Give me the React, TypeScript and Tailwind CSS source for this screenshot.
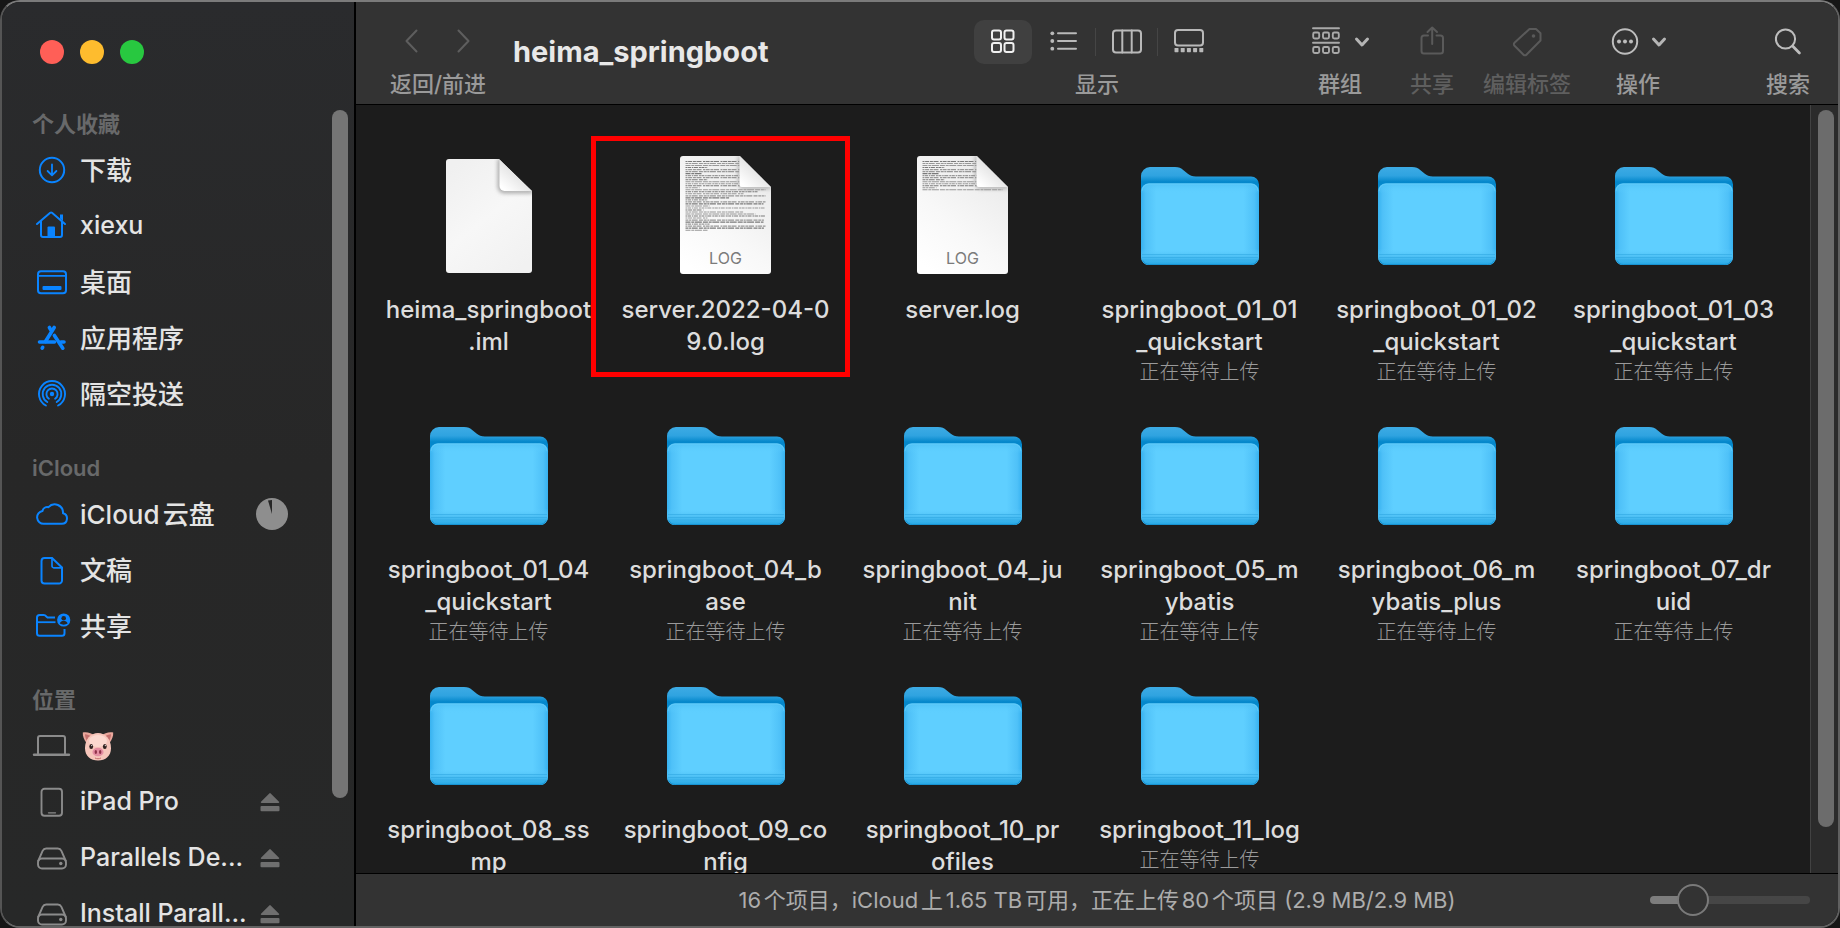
import type { ReactNode } from "react";

const BLUE = "#0a84ff";
const GREY = "#8b8b8b";

function SideIcon({ color, children }: { color: string; children: ReactNode }) {
  return (
    <svg
      viewBox="0 0 36 36"
      className="h-9 w-9 shrink-0 overflow-visible"
      fill="none"
      stroke={color}
      strokeWidth={2}
      strokeLinecap="round"
      strokeLinejoin="round"
      aria-hidden="true"
    >
      {children}
    </svg>
  );
}

const DownloadIcon = () => (
  <SideIcon color={BLUE}>
    <circle cx="18" cy="18" r="12.2" />
    <path d="M18 12.5v10.6M13.6 19l4.4 4.3 4.4-4.3" strokeWidth={1.8} />
  </SideIcon>
);

const HomeIcon = () => (
  <SideIcon color={BLUE}>
    <path d="M3 16 16.2 4.8a1.4 1.4 0 0 1 1.8 0L31 16" />
    <path d="M7 13.5V27a2 2 0 0 0 2 2h17a2 2 0 0 0 2-2V13.5" />
    <path d="M26 6.5h3v6.5l-3-2.6z" fill={BLUE} stroke="none" />
    <path d="M13.5 29V19.5a1 1 0 0 1 1-1H20a1 1 0 0 1 1 1V29z" fill={BLUE} stroke="none" />
  </SideIcon>
);

const DesktopIcon = () => (
  <SideIcon color={BLUE}>
    <rect x="4" y="7.2" width="28" height="22" rx="3" />
    <path d="M4 11.8h28" strokeWidth={1.8} />
    <rect x="8.5" y="22" width="19" height="4" rx="1" fill={BLUE} stroke="none" />
  </SideIcon>
);

const AppsIcon = () => (
  <SideIcon color={BLUE}>
    <g strokeWidth={3.6}>
      <path d="M20.2 7.5 11.5 21.5" />
      <path d="M8.2 28.2 8.7 27.3" />
      <path d="M15.4 7.5 16.6 9.6" />
      <path d="M20.4 15.5 28.8 28.2" />
      <path d="M5.5 22h15M27 22h3" />
    </g>
  </SideIcon>
);

const AirdropIcon = () => (
  <SideIcon color={BLUE}>
    <circle cx="18" cy="18" r="2.2" fill={BLUE} stroke="none" />
    <path d="M14.9 22.7a5.6 5.6 0 1 1 6.2 0" strokeWidth={1.9} />
    <path d="M13.3 26a9.3 9.3 0 1 1 9.4 0" strokeWidth={1.9} />
    <path d="M11.9 29.5a13 13 0 1 1 12.2 0" strokeWidth={1.9} />
  </SideIcon>
);

const CloudIcon = () => (
  <SideIcon color={BLUE}>
    <path d="M9.8 27.8a6.5 6.5 0 0 1-1.3-12.9 5 5 0 0 1 6-3.7A8.3 8.3 0 0 1 29 17.2a5.4 5.4 0 0 1-1.2 10.6z" />
  </SideIcon>
);

const DocIcon = () => (
  <SideIcon color={BLUE}>
    <path d="M10.5 6H18l10 9.5v13a3 3 0 0 1-3 3H10.5a3 3 0 0 1-3-3V9a3 3 0 0 1 3-3z" />
    <path d="M18 6v8a1.8 1.8 0 0 0 1.8 1.8H28" strokeWidth={1.7} />
  </SideIcon>
);

const SharedFolderIcon = () => (
  <SideIcon color={BLUE}>
    <path
      d="M21 9.5h-7.5l-2.6-2.2a2 2 0 0 0-1.2-.4H5.6A2.6 2.6 0 0 0 3 9.5v15.7a2.6 2.6 0 0 0 2.6 2.6h22.3a2.6 2.6 0 0 0 2.6-2.6V21"
      strokeLinecap="butt"
    />
    <path d="M3 14.2h18.5" strokeLinecap="butt" strokeWidth={1.8} />
    <circle cx="29.7" cy="12" r="6.6" fill={BLUE} stroke="none" />
    <circle cx="29.7" cy="10.2" r="2.3" fill="#272727" stroke="none" />
    <path d="M25.8 15.5c.6-1.8 2-2.4 3.900-2.400s3.300.6 3.900 2.400c-2.200 1.500-5.600 1.500-7.800 0z" fill="#272727" stroke="none" />
  </SideIcon>
);

const LaptopIcon = () => (
  <SideIcon color={GREY}>
    <path d="M4 25.5V10a2 2 0 0 1 2-2h23a2 2 0 0 1 2 2v15.5" />
    <path d="M0 26.8h35" strokeWidth={2.4} />
  </SideIcon>
);

const TabletIcon = () => (
  <SideIcon color={GREY}>
    <rect x="7.5" y="4.8" width="20.5" height="27" rx="3" strokeWidth={1.9} />
    <path d="M14.5 28.8h7" strokeWidth={1.3} />
  </SideIcon>
);

const DriveIcon = () => (
  <SideIcon color={GREY}>
    <path d="M4.2 21 8.6 10.8A4 4 0 0 1 12.2 8.5h11.6a4 4 0 0 1 3.6 2.3L31.8 21" strokeWidth={1.9} />
    <rect x="4" y="18.5" width="28" height="10" rx="4" strokeWidth={1.9} />
    <circle cx="26.8" cy="23.5" r="1.7" fill={GREY} stroke="none" />
  </SideIcon>
);

const PigFace = () => (
  <svg viewBox="0 0 32 32" className="ml-0.5 h-8 w-8" role="img" aria-label="小猪">
    <path d="M.8 2.6C4 1.5 10 3 12.5 5.5L4.5 13C2 10 .5 6 .8 2.6z" fill="#e9a79c" />
    <path d="M31.2 2.6C28 1.5 22 3 19.5 5.5l8 7.5c2.5-3 4-7 3.7-10.4z" fill="#e9a79c" />
    <path d="M3 4.2c2 0 4.8 1 6.6 2.5L5 11C3.8 9 3 6.5 3 4.2z" fill="#c3706e" />
    <path d="M29 4.2c-2 0-4.8 1-6.6 2.5L27 11c1.2-2 2-4.5 2-6.8z" fill="#c3706e" />
    <path d="M16 3C8.5 3 3 9.5 3 18.2 3 26 8.5 30.5 16 30.5S29 26 29 18.2C29 9.5 23.5 3 16 3z" fill="#f7c6bb" />
    <ellipse cx="16" cy="11" rx="9" ry="6" fill="#fcd9d0" />
    <ellipse cx="9.2" cy="16.5" rx="1.9" ry="2.5" fill="#2f2220" />
    <ellipse cx="22.8" cy="16.5" rx="1.9" ry="2.5" fill="#2f2220" />
    <circle cx="9.7" cy="15.6" r=".6" fill="#fff" />
    <circle cx="23.3" cy="15.6" r=".6" fill="#fff" />
    <ellipse cx="16" cy="22" rx="5.6" ry="4.3" fill="#e58fa3" />
    <ellipse cx="13.8" cy="22" rx="1.2" ry="2" fill="#8e3248" />
    <ellipse cx="18.2" cy="22" rx="1.2" ry="2" fill="#8e3248" />
    <path d="M13 28c2 1 4 1 6 0" stroke="#c3706e" strokeWidth="1" fill="none" />
  </svg>
);

const ProgressPie = () => (
  <svg viewBox="0 0 32 32" className="h-8 w-8 shrink-0" aria-hidden="true">
    <circle cx="16" cy="16" r="16" fill="#8e8e8e" />
    <path d="M16 16 12 2.5Q14 2 16 2z" fill="#272727" />
  </svg>
);

const EjectButton = ({ name }: { name: string }) => (
  <button type="button" aria-label={"推出 " + name} className="flex h-8 w-8 shrink-0 items-center justify-center pr-1">
    <svg viewBox="0 0 20 20" className="h-5 w-5" fill="#6f6f6f" aria-hidden="true">
      <path d="M9.3 1.4a1 1 0 0 1 1.4 0l8.3 8.4a.7.7 0 0 1-.5 1.2h-17a.7.7 0 0 1-.5-1.2z" />
      <rect x=".5" y="14" width="19" height="5.2" rx="1" />
    </svg>
  </button>
);

type Place = { label: string; icon: ReactNode; face?: ReactNode; end?: ReactNode };

const sections: { title: string; places: Place[] }[] = [
  {
    title: "个人收藏",
    places: [
      { label: "下载", icon: <DownloadIcon /> },
      { label: "xiexu", icon: <HomeIcon /> },
      { label: "桌面", icon: <DesktopIcon /> },
      { label: "应用程序", icon: <AppsIcon /> },
      { label: "隔空投送", icon: <AirdropIcon /> },
    ],
  },
  {
    title: "iCloud",
    places: [
      { label: "iCloud云盘", icon: <CloudIcon />, end: <ProgressPie /> },
      { label: "文稿", icon: <DocIcon /> },
      { label: "共享", icon: <SharedFolderIcon /> },
    ],
  },
  {
    title: "位置",
    places: [
      { label: "小猪", icon: <LaptopIcon />, face: <PigFace /> },
      { label: "iPad Pro", icon: <TabletIcon />, end: <EjectButton name="iPad Pro" /> },
      { label: "Parallels De...", icon: <DriveIcon />, end: <EjectButton name="Parallels" /> },
      { label: "Install Parall...", icon: <DriveIcon />, end: <EjectButton name="Install" /> },
    ],
  },
];

const labelSize = (label: string) => (/^[ -~]+$/.test(label) ? "text-[25px]" : "text-[26px]");

function Sidebar() {
  return (
    <aside className="relative w-[354px] shrink-0 overflow-hidden border-r-2 border-black bg-linear-to-b from-[#2a2b2d] via-[#272727] to-[#272828]">
      <div className="flex gap-4 pt-[38px] pl-[38px]">
        <button type="button" aria-label="关闭" className="h-6 w-6 rounded-full bg-[#ff5f57]" />
        <button type="button" aria-label="最小化" className="h-6 w-6 rounded-full bg-[#febc2e]" />
        <button type="button" aria-label="缩放" className="h-6 w-6 rounded-full bg-[#28c840]" />
      </div>
      <nav className="mt-[42px] flex flex-col gap-7">
        {sections.map((section) => (
          <section key={section.title}>
            <h2 className="h-9 pl-[30px] text-[22px] leading-9 font-semibold text-[#68696a]">{section.title}</h2>
            <ul>
              {section.places.map((place) => (
                <li key={place.label} className="flex h-14 items-center pr-[66px] pl-8">
                  <a href="#" className="flex min-w-0 flex-1 items-center gap-2.5 font-medium whitespace-nowrap text-[#e4e4e4]">
                    {place.icon}
                    {place.face ?? <span className={labelSize(place.label)}>{place.label}</span>}
                  </a>
                  {place.end}
                </li>
              ))}
            </ul>
          </section>
        ))}
      </nav>
      <div className="absolute top-[108px] right-1.5 h-[74.5%] w-4 rounded-full bg-[#757575]" />
    </aside>
  );
}

const Chevron = () => (
  <svg viewBox="0 0 16 12" className="h-3 w-4" fill="none" stroke="#b5b5b5" strokeWidth="3" strokeLinecap="round" strokeLinejoin="round" aria-hidden="true">
    <path d="m2.5 3 5.5 6 5.5-6" />
  </svg>
);

function ToolIcon({ color, children }: { color: string; children: ReactNode }) {
  return (
    <svg viewBox="0 0 32 32" className="h-8 w-8 shrink-0" fill="none" stroke={color} strokeWidth={2} strokeLinecap="round" strokeLinejoin="round" aria-hidden="true">
      {children}
    </svg>
  );
}

function Tool({ label, className, dim, children }: { label: string; className: string; dim?: boolean; children: ReactNode }) {
  return (
    <div className={"flex shrink-0 flex-col items-center " + className}>
      <div className="flex h-11 items-center justify-center">{children}</div>
      <span className={"text-[22px] leading-10 font-medium whitespace-nowrap " + (dim ? "text-[#5f5f5f]" : "text-[#9a9a9a]")}>{label}</span>
    </div>
  );
}

const dots = [3.5, 9.7, 15.9, 22.1, 28.3];

function Toolbar() {
  return (
    <header className="flex h-[103px] shrink-0 items-start border-b border-black bg-[#333333] pt-[18px] pr-7 pl-[31px]">
      <Tool label="返回/前进" className="w-[102px]">
        <button type="button" aria-label="返回" className="flex w-[52px] justify-center">
          <ToolIcon color="#5e5e5e"><path d="M20.5 4.5 10.5 15l10 10.5" /></ToolIcon>
        </button>
        <button type="button" aria-label="前进" className="flex w-[52px] justify-center">
          <ToolIcon color="#5e5e5e"><path d="M10.5 4.5 20.5 15l-10 10.5" /></ToolIcon>
        </button>
      </Tool>
      <h1 className="ml-6 pt-3 text-[29px] leading-10 font-bold text-[#e8e8e8]">heima_springboot</h1>

      <Tool label="显示" className="ml-auto">
        <div className="flex items-center">
          <button type="button" aria-label="图标" aria-pressed="true" className="flex h-11 w-[58px] items-center justify-center rounded-[10px] bg-[#404040]">
            <ToolIcon color="#f0f0f0">
              <rect x="5" y="4.5" width="9" height="9" rx="2" />
              <rect x="17.5" y="4.5" width="9" height="9" rx="2" />
              <rect x="5" y="17" width="9" height="9" rx="2" />
              <rect x="17.5" y="17" width="9" height="9" rx="2" />
            </ToolIcon>
          </button>
          <button type="button" aria-label="列表" className="flex h-7 w-[64px] items-center justify-center border-r border-[#454545]">
            <ToolIcon color="#b9b9b9">
              <path d="M10 7.3h18M10 15h18M10 22.7h18" />
              <g fill="#b9b9b9" stroke="none">
                <circle cx="4.3" cy="7.3" r="1.9" />
                <circle cx="4.3" cy="15" r="1.9" />
                <circle cx="4.3" cy="22.7" r="1.9" />
              </g>
            </ToolIcon>
          </button>
          <button type="button" aria-label="分栏" className="flex h-7 w-[62px] items-center justify-center border-r border-[#454545]">
            <ToolIcon color="#b9b9b9">
              <rect x="2" y="4.5" width="28" height="22" rx="3" />
              <path d="M11.3 4.5v22M20.7 4.5v22" />
            </ToolIcon>
          </button>
          <button type="button" aria-label="画廊" className="flex h-7 w-[62px] items-center justify-center">
            <ToolIcon color="#b9b9b9">
              <rect x="2" y="4" width="28" height="15.5" rx="3" />
              <g fill="#b9b9b9" stroke="none">
                {dots.map((x) => (
                  <rect key={x} x={x - 2} y="22" width="4" height="4.2" rx=".6" />
                ))}
              </g>
            </ToolIcon>
          </button>
        </div>
      </Tool>

      <Tool label="群组" className="ml-[90px] w-[60px]">
        <button type="button" aria-label="群组方式" className="flex items-center gap-3">
          <ToolIcon color="#a9a9a9">
            <path d="M3 2.3h26M3 16.8h26" strokeWidth={1.9} />
            {[3.2, 13, 22.8].map((x) => (
              <g key={x} strokeWidth={1.9}>
                <rect x={x} y="6.5" width="6" height="6" rx="1.5" />
                <rect x={x} y="21" width="6" height="6" rx="1.5" />
              </g>
            ))}
          </ToolIcon>
          <Chevron />
        </button>
      </Tool>

      <Tool label="共享" className="ml-10 w-11" dim>
        <button type="button" aria-label="共享项目">
          <ToolIcon color="#5a5a5a">
            <path d="M12 9.5H8A2.5 2.5 0 0 0 5.5 12v13A2.5 2.5 0 0 0 8 27.5h16.5a2.5 2.5 0 0 0 2.5-2.5V12a2.5 2.5 0 0 0-2.5-2.5H20.5" />
            <path d="M16.2 18V1.8M11.5 6l4.7-4.5L21 6" />
          </ToolIcon>
        </button>
      </Tool>
      <Tool label="编辑标签" className="ml-7 w-[90px]" dim>
        <button type="button" aria-label="标签">
          <ToolIcon color="#5a5a5a">
            <path d="M18.5 3 3.5 16.8a2 2 0 0 0 0 2.9l9 9a2 2 0 0 0 2.9 0L29.5 14.5V7.3L25 3z" />
            <circle cx="22.5" cy="10" r="1.8" fill="#5a5a5a" stroke="none" />
          </ToolIcon>
        </button>
      </Tool>
      <Tool label="操作" className="ml-9 w-[60px]">
        <button type="button" aria-label="更多操作" className="flex items-center gap-2.5">
          <ToolIcon color="#bdbdbd">
            <circle cx="16" cy="15.5" r="12.2" />
            <g fill="#bdbdbd" stroke="none">
              <circle cx="10" cy="15.5" r="2" />
              <circle cx="16" cy="15.5" r="2" />
              <circle cx="22" cy="15.5" r="2" />
            </g>
          </ToolIcon>
          <Chevron />
        </button>
      </Tool>
      <Tool label="搜索" className="ml-[98px] w-11">
        <button type="button" aria-label="搜索项目">
          <ToolIcon color="#bdbdbd">
            <circle cx="13.5" cy="13" r="9.6" />
            <path d="m20.8 20.3 6.6 6.6" strokeWidth={2.8} />
          </ToolIcon>
        </button>
      </Tool>
    </header>
  );
}

const FolderArt = () => (
  <svg viewBox="0 0 118 98" className="h-[98px] w-[118px] overflow-visible" aria-hidden="true">
    <defs>
      <linearGradient id="folder-back" x1="0" y1="0" x2="0" y2="1">
        <stop offset="0" stopColor="#3dabe4" />
        <stop offset=".1" stopColor="#2fa3e0" />
        <stop offset=".17" stopColor="#0487cb" />
        <stop offset="1" stopColor="#1c9bdc" />
      </linearGradient>
      <linearGradient id="folder-side" x1="0" y1="0" x2="1" y2="0">
        <stop offset="0" stopColor="#37b2f0" />
        <stop offset=".04" stopColor="#4fc1f8" />
        <stop offset=".13" stopColor="#5fcfff" />
        <stop offset=".87" stopColor="#5fcfff" />
        <stop offset=".96" stopColor="#4fc1f8" />
        <stop offset="1" stopColor="#37b2f0" />
      </linearGradient>
      <linearGradient id="folder-fade" x1="0" y1="0" x2="0" y2="1">
        <stop offset="0" stopColor="#4dc0f5" stopOpacity=".8" />
        <stop offset=".12" stopColor="#5fcfff" stopOpacity="0" />
        <stop offset=".8" stopColor="#5fcfff" stopOpacity="0" />
        <stop offset=".9" stopColor="#4abdf3" stopOpacity=".9" />
        <stop offset="1" stopColor="#23a5e3" />
      </linearGradient>
    </defs>
    <path d="M0 9a9 9 0 0 1 9-9h25c4 0 6 1.2 8.5 3.2l4 3.3c2.5 2 4.500 3 8.500 3h55a8 8 0 0 1 8 8v70H0z" fill="url(#folder-back)" />
    <rect x="0" y="16.5" width="118" height="81.5" rx="8" fill="url(#folder-side)" />
    <rect x="0" y="16.5" width="118" height="81.5" rx="8" fill="url(#folder-fade)" />
    <path d="M1 24a7 7 0 0 1 7-7h102a7 7 0 0 1 7 7" fill="none" stroke="#6fd2fb" strokeWidth="1" opacity=".6" />
    <path d="M1 87.5h116M1 90.5h116" stroke="#2da5e0" strokeWidth=".9" opacity=".6" />
    <path d="M1.5 93h115" stroke="#2da5e0" strokeWidth=".9" opacity=".4" />
    <path d="M2 93.5a7 7 0 0 0 6.5 4h101a7 7 0 0 0 6.5-4" fill="none" stroke="#1893d2" strokeWidth="1" />
  </svg>
);

const PaperDefs = () => (
  <defs>
    <linearGradient id="paper" x1=".8" y1="0" x2=".2" y2="1">
      <stop offset="0" stopColor="#e9e9e9" />
      <stop offset=".6" stopColor="#f8f8f8" />
      <stop offset="1" stopColor="#ffffff" />
    </linearGradient>
    <linearGradient id="paper-plain" x1=".2" y1="0" x2=".8" y2="1">
      <stop offset="0" stopColor="#f0f0f0" />
      <stop offset=".5" stopColor="#f7f7f7" />
      <stop offset="1" stopColor="#f1f1f1" />
    </linearGradient>
    <linearGradient id="curl" x1=".1" y1=".9" x2=".55" y2=".4">
      <stop offset="0" stopColor="#ffffff" />
      <stop offset="1" stopColor="#e2e2e2" />
    </linearGradient>
    <filter id="soft" x="-40%" y="-40%" width="180%" height="180%">
      <feGaussianBlur stdDeviation="2.2" />
    </filter>
    <clipPath id="clip-plain"><path d="M3 0h50l33 32v79a3 3 0 0 1-3 3H3a3 3 0 0 1-3-3V3a3 3 0 0 1 3-3z" /></clipPath>
    <clipPath id="clip-log"><path d="M3 0h57l31 31v84a3 3 0 0 1-3 3H3a3 3 0 0 1-3-3V3a3 3 0 0 1 3-3z" /></clipPath>
  </defs>
);

const PlainArt = () => (
  <svg viewBox="0 0 86 114" className="h-[114px] w-[86px] overflow-visible" aria-hidden="true">
    <PaperDefs />
    <g clipPath="url(#clip-plain)">
      <rect width="86" height="114" fill="url(#paper-plain)" />
      <path d="M54 0v28a4 4 0 0 0 4 4h29" fill="none" stroke="#9a9a9a" strokeWidth="4" filter="url(#soft)" />
      <path d="M53.5 0v27a5 5 0 0 0 5 5H86z" fill="url(#curl)" />
    </g>
  </svg>
);

const lineWidths = [54, 80, 76, 22, 60, 80, 16, 80, 78, 22, 80, 80, 76, 14, 80, 72, 58, 80, 44, 22, 80, 78, 24, 79, 18, 58, 70, 80, 22, 79, 78, 24, 80, 79, 22];
const inks = ["2 .6 4 .8 3 .6 5 1.5", "3 .6 2 .6 6 1.2 4 .8", "5 .8 3 .6 7 1", "2 .5 3 .8 1.5 .6 4 1"];

function LogArt({ rows }: { rows: number }) {
  return (
    <svg viewBox="0 0 91 118" className="mb-0.5 h-[118px] w-[91px] overflow-visible" aria-hidden="true">
      <g clipPath="url(#clip-log)">
        <rect width="91" height="118" fill="url(#paper)" />
        {lineWidths.slice(0, rows).map((w, i) => (
          <path
            key={i}
            d={"M5.5 " + (5.5 + i * 2.02) + "h" + w}
            stroke={i % 3 === 0 ? "#7a7a7a" : "#989898"}
            strokeWidth="1.1"
            strokeDasharray={inks[i % 4]}
          />
        ))}
        <path d="M60 0v27a4 4 0 0 0 4 4h27" fill="none" stroke="#9a9a9a" strokeWidth="3" filter="url(#soft)" />
        <path d="M59.5 0v29a2 2 0 0 0 2 2H91z" fill="url(#curl)" />
      </g>
      <text x="45.5" y="108" textAnchor="middle" fontSize="16" fill="#7b7b7b" fontFamily="Inter, sans-serif">LOG</text>
    </svg>
  );
}

type Entry = { art: "folder" | "plain" | "log" | "shortlog"; lines: string[]; waiting?: boolean; marked?: boolean };

const entries: Entry[] = [
  { art: "plain", lines: ["heima_springboot", ".iml"] },
  { art: "log", lines: ["server.2022-04-0", "9.0.log"], marked: true },
  { art: "shortlog", lines: ["server.log"] },
  { art: "folder", lines: ["springboot_01_01", "_quickstart"], waiting: true },
  { art: "folder", lines: ["springboot_01_02", "_quickstart"], waiting: true },
  { art: "folder", lines: ["springboot_01_03", "_quickstart"], waiting: true },
  { art: "folder", lines: ["springboot_01_04", "_quickstart"], waiting: true },
  { art: "folder", lines: ["springboot_04_b", "ase"], waiting: true },
  { art: "folder", lines: ["springboot_04_ju", "nit"], waiting: true },
  { art: "folder", lines: ["springboot_05_m", "ybatis"], waiting: true },
  { art: "folder", lines: ["springboot_06_m", "ybatis_plus"], waiting: true },
  { art: "folder", lines: ["springboot_07_dr", "uid"], waiting: true },
  { art: "folder", lines: ["springboot_08_ss", "mp"] },
  { art: "folder", lines: ["springboot_09_co", "nfig"] },
  { art: "folder", lines: ["springboot_10_pr", "ofiles"] },
  { art: "folder", lines: ["springboot_11_log"], waiting: true },
];

function FileTile({ entry }: { entry: Entry }) {
  return (
    <li className="relative flex flex-col items-center text-center">
      <div className="flex h-32 items-center justify-center">
        {entry.art === "folder" && <FolderArt />}
        {entry.art === "plain" && <PlainArt />}
        {entry.art === "log" && <LogArt rows={35} />}
        {entry.art === "shortlog" && <LogArt rows={15} />}
      </div>
      <p className="mt-3.5 text-2xl font-medium whitespace-nowrap text-[#dddddd]">
        {entry.lines.map((line) => (
          <span key={line} className="block leading-8">{line}</span>
        ))}
      </p>
      {entry.waiting && <p className="text-xl leading-7 font-light text-[#9a9a9a]">正在等待上传</p>}
      {entry.marked && <div className="absolute -top-4 -right-1.5 -left-4 h-[241px] border-[5px] border-[#ff0000]" />}
    </li>
  );
}

export default function App() {
  return (
    <div className="h-screen bg-[#161616] font-['Inter','Noto_Sans_CJK_SC',sans-serif] [text-autospace:normal]">
      <div className="flex h-full overflow-hidden rounded-[20px] border-2 border-t-[#7b7b7b] border-r-[#606060] border-b-[#636363] border-l-[#555555]">
        <Sidebar />
        <main className="flex min-w-0 flex-1 flex-col">
          <Toolbar />
          <div className="flex min-h-0 flex-1 bg-[#1c1c1c]">
            <ul className="grid min-w-0 flex-1 auto-rows-[260px] grid-cols-6 overflow-hidden pt-[47px] pr-[18px] pl-3.5">
              {entries.map((entry) => (
                <FileTile key={entry.lines.join("")} entry={entry} />
              ))}
            </ul>
            <div className="flex w-7 shrink-0 justify-center border-l border-[#424242] bg-[#2b2b2b] pt-[5px] pl-0.5">
              <div className="h-[94%] w-4 rounded-full bg-[#6c6c6c]" />
            </div>
          </div>
          <footer className="relative flex h-[53px] shrink-0 items-center justify-center border-t border-black bg-[#333333]">
            <p className="text-[22px] whitespace-nowrap text-[#adadad]">
              16个项目，iCloud上1.65 TB可用，正在上传80个项目 (2.9 MB/2.9 MB)
            </p>
            <input
              type="range"
              aria-label="图标大小"
              min={0}
              max={100}
              defaultValue={21}
              className="absolute right-7 h-8 w-[160px] appearance-none bg-transparent [&::-webkit-slider-runnable-track]:h-2 [&::-webkit-slider-runnable-track]:rounded-full [&::-webkit-slider-runnable-track]:bg-linear-to-r [&::-webkit-slider-runnable-track]:from-[#7d7d7d] [&::-webkit-slider-runnable-track]:from-27% [&::-webkit-slider-runnable-track]:to-[#464646] [&::-webkit-slider-runnable-track]:to-27% [&::-webkit-slider-thumb]:-mt-3 [&::-webkit-slider-thumb]:h-8 [&::-webkit-slider-thumb]:w-8 [&::-webkit-slider-thumb]:appearance-none [&::-webkit-slider-thumb]:rounded-full [&::-webkit-slider-thumb]:border-2 [&::-webkit-slider-thumb]:border-[#7a7a7a] [&::-webkit-slider-thumb]:bg-[#333333]"
            />
          </footer>
        </main>
      </div>
    </div>
  );
}
